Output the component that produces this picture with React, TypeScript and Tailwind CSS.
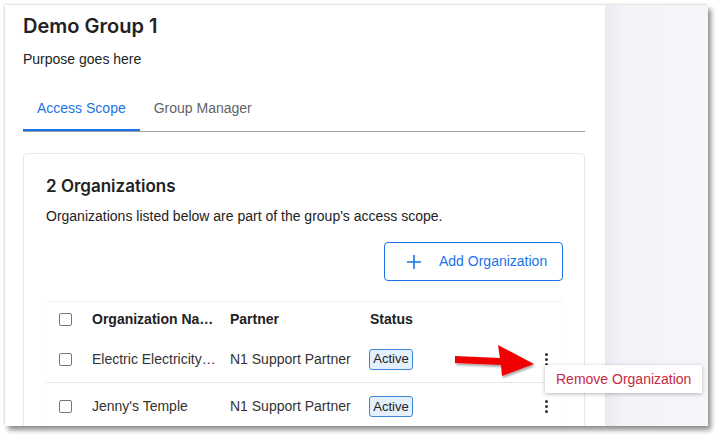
import React from 'react';

const body = { fontFamily: '"Liberation Sans", Arial, sans-serif' };
const heading = { fontFamily: 'Inter, "Liberation Sans", sans-serif' };

function Checkbox() {
  return <div className="h-[13px] w-[13px] rounded-[2px] border border-[#767676] bg-white" />;
}

function Kebab() {
  return (
    <div className="flex flex-col items-center gap-[2px]">
      <span className="h-[3px] w-[3px] rounded-full bg-[#333]" />
      <span className="h-[3px] w-[3px] rounded-full bg-[#333]" />
      <span className="h-[3px] w-[3px] rounded-full bg-[#333]" />
    </div>
  );
}

function ActiveBadge() {
  return (
    <span className="inline-flex h-[21px] w-[44px] items-center justify-center rounded-[3px] border border-[#3b86d9] bg-[#e4f0fc] text-[13px] text-[#222]">
      Active
    </span>
  );
}

const rows = [
  { name: 'Electric Electricity…', partner: 'N1 Support Partner' },
  { name: "Jenny's Temple", partner: 'N1 Support Partner' },
];

export default function App() {
  return (
    <div className="h-[440px] w-[723px] overflow-hidden bg-white" style={body}>
      <div className="relative ml-[5px] mt-[5px] flex h-[421px] w-[703px] overflow-hidden shadow-[3px_4px_5px_rgba(0,0,0,0.45),-1px_-1px_2px_rgba(0,0,0,0.12)]">
        {/* main panel */}
        <div className="w-[600px] shrink-0 bg-white pl-[18px] pr-[20px]">
          <h1 className="mt-[7px] text-[20px] font-semibold leading-[28px] text-[#222]" style={heading}>
            Demo Group 1
          </h1>
          <p className="mt-[9px] text-[14px] leading-[20px] text-[#222]">Purpose goes here</p>

          <div className="mt-[15px] flex h-[48px] border-b border-[#9aa0a6]">
            <div className="flex items-center border-b-2 border-[#1a73e8] px-[14px] pt-[3px] text-[14px] text-[#1a73e8]">
              Access Scope
            </div>
            <div className="flex items-center px-[14px] pt-[2px] text-[14px] text-[#5f6368]">Group Manager</div>
          </div>

          <div className="mt-[21px] rounded-[4px] border border-[#e6e7ea] pb-4 pl-[22px] pr-[21px] pt-[20px]">
            <h2 className="text-[17px] font-semibold leading-[24px] text-[#222]" style={heading}>
              2 Organizations
            </h2>
            <p className="mt-[8px] text-[14px] leading-[20px] text-[#222]">
              Organizations listed below are part of the group's access scope.
            </p>
            <div className="mt-[16px] flex justify-end">
              <button className="flex h-[39px] w-[179px] items-center rounded-[4px] border border-[#1a73e8] pl-[21px] text-[14px] text-[#1a73e8]">
                <svg width="16" height="16" viewBox="0 0 16 16" className="mr-[17px]">
                  <path d="M8 1v14M1 8h14" stroke="#1a73e8" strokeWidth="1.6" />
                </svg>
                Add Organization
              </button>
            </div>

            <div className="mt-[20px] rounded-[4px] border-t border-[#f3f3f3] shadow-[0_0_2px_rgba(0,0,0,0.05)]">
              <div className="flex h-[34px] items-center text-[14px] font-bold text-[#222]">
                <div className="w-[46px] pl-[13px]">
                  <Checkbox />
                </div>
                <div className="w-[138px]">Organization Na…</div>
                <div className="w-[140px]">Partner</div>
                <div>Status</div>
              </div>
              {rows.map((r, i) => (
                <div
                  key={i}
                  className={`flex h-[47px] items-center pr-[15px] text-[14px] text-[#333] ${i === 0 ? 'border-b border-[#e6e6e6]' : ''}`}
                >
                  <div className="w-[46px] pl-[13px]">
                    <Checkbox />
                  </div>
                  <div className="w-[138px] truncate">{r.name}</div>
                  <div className="w-[139px]">{r.partner}</div>
                  <div>
                    <ActiveBadge />
                  </div>
                  <div className="ml-auto">
                    <Kebab />
                  </div>
                </div>
              ))}
            </div>
          </div>
        </div>

        {/* right side panel */}
        <div className="flex-1 bg-[linear-gradient(to_right,#eaebf1,#f3f4f8_18px,#f5f6fa)]" />

        {/* red annotation arrow */}
        <svg
          className="absolute left-[443px] top-[333px]"
          width="92"
          height="44"
          viewBox="0 0 92 44"
        >
          <defs>
            <filter id="sh" x="-10%" y="-10%" width="130%" height="140%">
              <feDropShadow dx="1" dy="2" stdDeviation="1.2" floodColor="#000" floodOpacity="0.35" />
            </filter>
          </defs>
          <path d="M7 18 L52 20 L50 7 L86 26 L54 38 L53 27 L7 25 Z" fill="#f00000" filter="url(#sh)" />
        </svg>

        {/* popup menu */}
        <div className="absolute left-[540px] top-[360px] flex h-[28px] w-[157px] items-center bg-white pl-[11px] text-[14px] text-[#c42b43] shadow-[0_1px_4px_rgba(0,0,0,0.28)]">
          Remove Organization
        </div>
      </div>
    </div>
  );
}
